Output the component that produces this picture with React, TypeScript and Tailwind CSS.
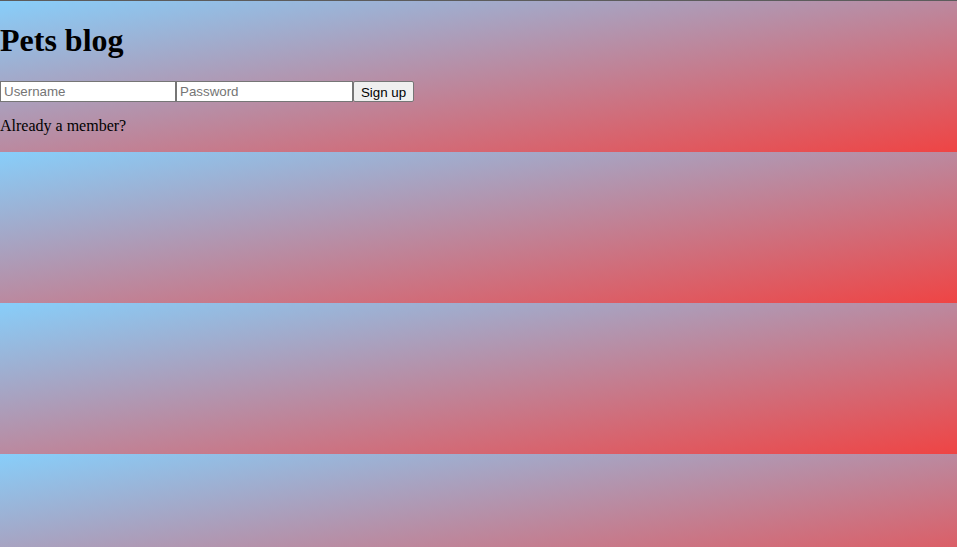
import React from 'react';

export default function App() {
  return (
    <div className="h-[547px] w-full overflow-hidden border-t border-[#5c5c5c] bg-[linear-gradient(to_bottom_right,#87cefa,#ef4444)] bg-[length:100%_151px] bg-repeat font-['Liberation_Serif',serif] text-black">
      <h1 className="mt-[21px] mb-[22px] text-[32px] font-bold leading-[37px]">Pets blog</h1>
      <form className="flex h-[21px] items-stretch font-['Liberation_Sans',Arial,sans-serif] text-[13.33px]">
        <input
          type="text"
          placeholder="Username"
          className="w-[176px] border border-[#767676] bg-white px-[3px] py-[1px] placeholder:text-[#757575]"
        />
        <input
          type="password"
          placeholder="Password"
          className="w-[177px] border border-[#767676] bg-white px-[3px] py-[1px] placeholder:text-[#757575]"
        />
        <button
          type="button"
          className="w-[61px] rounded-[2px] border border-[#767676] bg-[#efefef] py-[1px]"
        >
          Sign up
        </button>
      </form>
      <p className="mt-[15px] text-base leading-[18px]">Already a member?</p>
    </div>
  );
}
